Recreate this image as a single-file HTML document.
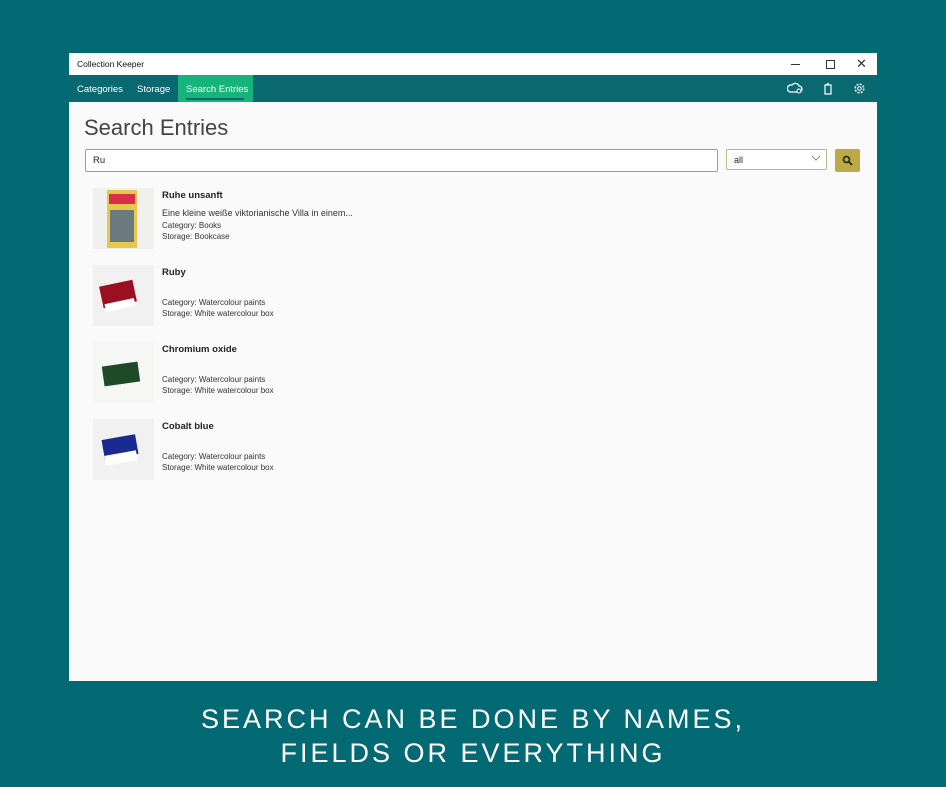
<!DOCTYPE html><html><head><style>
body{margin:0;width:946px;height:787px;background:#036a74;position:relative;font-family:"Liberation Sans",sans-serif;overflow:hidden}
.a{position:absolute}
.win{left:69px;top:53px;width:808px;height:628px;background:#fafafa}
.t{font-size:11px;color:#111}
.thumb{left:24px;width:61px;height:61px;background:#f1f1f1;overflow:hidden}
.n{left:93px;font-size:9.5px;font-weight:bold;color:#222}
.s{left:93px;font-size:8px;color:#333;line-height:11px}
</style></head><body>
<div class="a win">
 <div class="a" style="left:0;top:0;width:808px;height:22px;background:#fff"></div>
 <div class="a t" style="left:8px;top:6px;font-size:8.5px">Collection Keeper</div>
 <div class="a" style="left:722px;top:11px;width:9px;height:1px;background:#333"></div>
 <div class="a" style="left:757px;top:7px;width:7px;height:7px;border:1px solid #333"></div>
 <div class="a" style="left:787px;top:3px;font-size:13px;color:#333">✕</div>
 <div class="a" style="left:0;top:22px;width:808px;height:27px;background:#0a6870"></div>
 <div class="a" style="left:109px;top:22px;width:75px;height:27px;background:#16b37c"></div>
 <div class="a" style="left:117px;top:45px;width:58px;height:2px;background:#0a6870"></div>
 <div class="a" style="left:8px;top:31px;font-size:9.5px;color:#fff">Categories</div>
 <div class="a" style="left:68px;top:31px;font-size:9.5px;color:#fff">Storage</div>
 <div class="a" style="left:117px;top:31px;font-size:9.5px;color:#fff">Search Entries</div>
 <svg class="a" style="left:718px;top:28px" width="16" height="14"><path d="M3 11h9a3 3 0 0 0 0-6a4 4 0 0 0-7-1a3.5 3.5 0 0 0-2 7z" fill="none" stroke="#fff" stroke-width="1.3"/><circle cx="12" cy="10" r="2" fill="#0a6870" stroke="#fff"/></svg>
 <svg class="a" style="left:754px;top:29px" width="10" height="13"><path d="M2 3h6v9H2z M3 3l3-2" fill="none" stroke="#fff" stroke-width="1.2"/></svg>
 <svg class="a" style="left:784px;top:29px" width="13" height="13"><circle cx="6.5" cy="6.5" r="4.3" fill="none" stroke="#fff" stroke-width="1.5" stroke-dasharray="2 1.4"/><circle cx="6.5" cy="6.5" r="1.8" fill="none" stroke="#fff"/></svg>
 <div class="a" style="left:15px;top:62px;font-size:22px;color:#444">Search Entries</div>
 <div class="a" style="left:16px;top:96px;width:631px;height:21px;border:1px solid #a8a060;background:#fff;border-radius:2px"></div>
 <div class="a" style="left:24px;top:102px;font-size:9.5px;color:#222">Ru</div>
 <div class="a" style="left:657px;top:96px;width:99px;height:19px;border:1px solid #bdb68a;background:#fff;border-radius:2px"></div>
 <div class="a" style="left:665px;top:102px;font-size:9px;color:#222">all</div>
 <svg class="a" style="left:742px;top:102px" width="10" height="7"><path d="M1 1l4 4 4-4" fill="none" stroke="#888"/></svg>
 <div class="a" style="left:766px;top:96px;width:25px;height:23px;background:#bcaa45;border-radius:2px"></div>
 <svg class="a" style="left:773px;top:102px" width="11" height="11"><circle cx="4.5" cy="4.5" r="3" fill="none" stroke="#222" stroke-width="1.6"/><path d="M7 7l3 3" stroke="#222" stroke-width="1.8"/></svg>

 <div class="a thumb" style="top:135px;background:#f0f0ee"><div class="a" style="left:14px;top:2px;width:30px;height:58px;background:#e8c84a"></div><div class="a" style="left:16px;top:6px;width:26px;height:10px;background:#d8304a"></div><div class="a" style="left:17px;top:22px;width:24px;height:32px;background:#6a7a80"></div></div>
 <div class="a n" style="top:137px">Ruhe unsanft</div>
 <div class="a" style="left:93px;top:155px;font-size:9px;color:#333">Eine kleine weiße viktorianische Villa in einem...</div>
 <div class="a s" style="top:167px">Category: Books<br>Storage: Bookcase</div>

 <div class="a thumb" style="top:212px"><div class="a" style="left:8px;top:18px;width:34px;height:22px;background:#9a1020;transform:rotate(-12deg)"></div><div class="a" style="left:12px;top:36px;width:30px;height:8px;background:#fff;transform:rotate(-12deg)"></div></div>
 <div class="a n" style="top:214px">Ruby</div>
 <div class="a s" style="top:244px">Category: Watercolour paints<br>Storage: White watercolour box</div>

 <div class="a thumb" style="top:289px;background:#f6f6f4"><div class="a" style="left:10px;top:22px;width:36px;height:20px;background:#1f4a28;transform:rotate(-8deg)"></div></div>
 <div class="a n" style="top:291px">Chromium oxide</div>
 <div class="a s" style="top:321px">Category: Watercolour paints<br>Storage: White watercolour box</div>

 <div class="a thumb" style="top:366px"><div class="a" style="left:10px;top:18px;width:34px;height:20px;background:#1a2a90;transform:rotate(-10deg)"></div><div class="a" style="left:12px;top:34px;width:32px;height:10px;background:#fff;transform:rotate(-10deg)"></div></div>
 <div class="a n" style="top:368px">Cobalt blue</div>
 <div class="a s" style="top:398px">Category: Watercolour paints<br>Storage: White watercolour box</div>
</div>
<div class="a" style="left:0;width:946px;top:702px;text-align:center;color:#fff;font-size:27px;letter-spacing:3px;line-height:34px">SEARCH CAN BE DONE BY NAMES,<br>FIELDS OR EVERYTHING</div>
</body></html>
